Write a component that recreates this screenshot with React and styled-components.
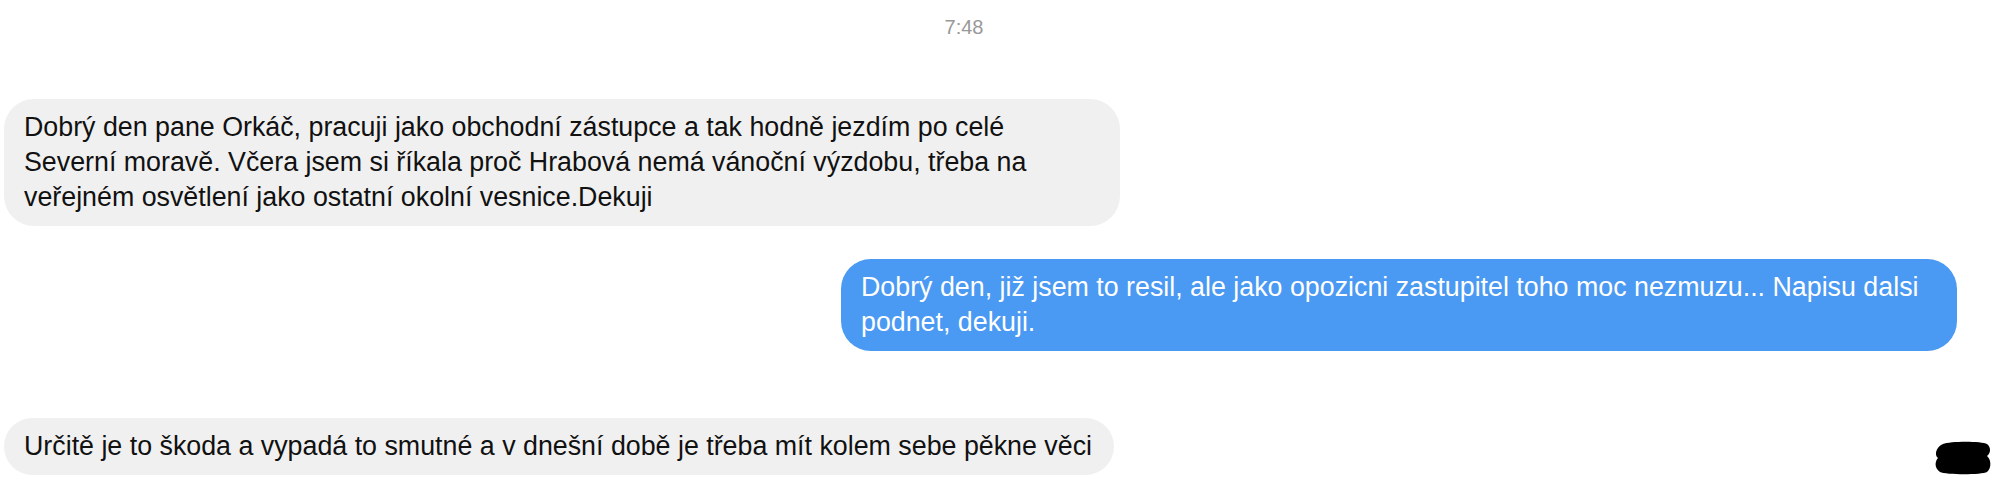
import styled, { createGlobalStyle } from 'styled-components';

const GlobalStyle = createGlobalStyle`
  html, body {
    margin: 0;
    padding: 0;
    background: #ffffff;
  }
  body {
    font-family: "Liberation Sans", Arial, Helvetica, sans-serif;
  }
`;

const Thread = styled.div`
  display: flex;
  flex-direction: column;
  width: 2000px;
  box-sizing: border-box;
  padding: 15px 8px 0 4px;
`;

const Timestamp = styled.div`
  text-align: center;
  padding-right: 68px;
  font-size: 20px;
  line-height: 24px;
  color: #999999;
`;

const Row = styled.div`
  display: flex;
  flex-direction: row;
  align-items: flex-end;
  justify-content: ${(p) => (p.$outgoing ? 'flex-end' : 'space-between')};
  margin-top: ${(p) => p.$gap}px;
  padding-right: ${(p) => (p.$outgoing ? 35 : 0)}px;
`;

const Bubble = styled.div`
  max-width: 1116px;
  box-sizing: border-box;
  padding: 11px 22px 11px 20px;
  border-radius: 30px;
  font-size: 26.8px;
  line-height: 35px;
  background: ${(p) => (p.$outgoing ? '#4a99f2' : '#f0f0f0')};
  color: ${(p) => (p.$outgoing ? '#ffffff' : '#111111')};
`;

const Scribble = styled.svg`
  display: block;
  width: 58px;
  height: 34px;
  flex-shrink: 0;
`;

// black scribble over the sender's avatar
function Redacted() {
  return (
    <Scribble viewBox="0 0 58 34">
      <path
        d="M9 3 C16 0, 48 0, 53 3 C57 6, 57 12, 53 15 C57 18, 58 27, 53 31 C48 34, 12 34, 6 31 C0 27, 1 20, 4 17 C0 14, 2 6, 9 3 Z"
        fill="#000"
      />
    </Scribble>
  );
}

const messages = [
  {
    gap: 60,
    outgoing: false,
    text: 'Dobrý den pane Orkáč, pracuji jako obchodní zástupce a tak hodně jezdím po celé Severní moravě. Včera jsem si říkala proč Hrabová nemá vánoční výzdobu, třeba na veřejném osvětlení jako ostatní okolní vesnice.Dekuji',
  },
  {
    gap: 33,
    outgoing: true,
    text: 'Dobrý den, již jsem to resil, ale jako opozicni zastupitel toho moc nezmuzu... Napisu dalsi podnet, dekuji.',
  },
  {
    gap: 67,
    outgoing: false,
    avatar: true,
    text: 'Určitě je to škoda a vypadá to smutné a v dnešní době je třeba mít kolem sebe pěkne věci',
  },
];

export default function App() {
  return (
    <>
      <GlobalStyle />
      <Thread>
        <Timestamp>7:48</Timestamp>
        {messages.map((m, i) => (
          <Row key={i} $gap={m.gap} $outgoing={m.outgoing}>
            <Bubble $outgoing={m.outgoing}>{m.text}</Bubble>
            {m.avatar && <Redacted />}
          </Row>
        ))}
      </Thread>
    </>
  );
}
